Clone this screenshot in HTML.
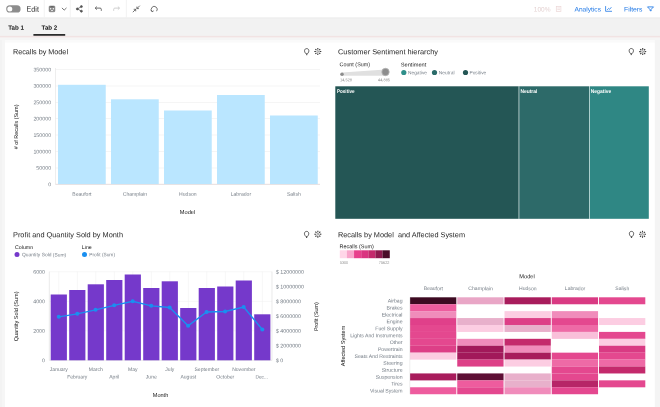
<!DOCTYPE html>
<html><head><meta charset="utf-8"><title>Dashboard</title>
<style>
html,body{margin:0;padding:0;background:#fff;overflow:hidden}
svg{display:block;font-family:"Liberation Sans",sans-serif;will-change:transform;opacity:0.999;filter:blur(0.4px);text-rendering:geometricPrecision}
</style></head>
<body>
<svg width="660" height="407" viewBox="0 0 660 407">
<rect x="0.00" y="0.00" width="660.00" height="407.00" fill="#ffffff"/>
<rect x="0.00" y="0.00" width="660.00" height="17.80" fill="#ffffff"/>
<rect x="0.00" y="17.80" width="660.00" height="18.60" fill="#f2f2f2"/>
<line x1="0" y1="17.8" x2="660" y2="17.8" stroke="#e4e4e4" stroke-width="0.6"/>
<rect x="0.00" y="35.90" width="660.00" height="1.80" fill="#f1e3e3"/>
<rect x="0.00" y="37.70" width="660.00" height="2.30" fill="#f5f5f5"/>
<rect x="0.00" y="40.00" width="660.00" height="2.60" fill="#fafafa"/>
<rect x="0.00" y="40.00" width="5.00" height="367.00" fill="#f6f6f6"/>
<rect x="0.00" y="40.00" width="2.00" height="367.00" fill="#f3f3f3"/>
<rect x="654.80" y="40.00" width="5.20" height="367.00" fill="#f4f4f4"/>
<rect x="6.2" y="5.3" width="14.4" height="7.2" rx="3.6" fill="#8d8d8d"/>
<circle cx="9.8" cy="8.9" r="2.5" fill="#ffffff"/>
<text x="26.6" y="11.64" transform="rotate(0.03 26.6 11.64)" font-size="7.6" fill="#2a2a2a" text-anchor="start" textLength="12.3" lengthAdjust="spacingAndGlyphs">Edit</text>
<line x1="44.3" y1="0" x2="44.3" y2="17.5" stroke="#f0f0f0" stroke-width="0.8"/>
<line x1="70.3" y1="0" x2="70.3" y2="17.5" stroke="#f0f0f0" stroke-width="0.8"/>
<line x1="88.5" y1="0" x2="88.5" y2="17.5" stroke="#f0f0f0" stroke-width="0.8"/>
<line x1="126.4" y1="0" x2="126.4" y2="17.5" stroke="#f0f0f0" stroke-width="0.8"/>
<rect x="49.1" y="6" width="5.8" height="5.8" rx="0.9" fill="#858585" stroke="#6f6f6f" stroke-width="0.5"/><rect x="50.6" y="6.3" width="2.8" height="0.9" fill="#5a5a5a"/><circle cx="50.6" cy="8.7" r="0.75" fill="#f4f4f4"/><circle cx="53.4" cy="8.7" r="0.75" fill="#f4f4f4"/><rect x="51.1" y="10" width="1.8" height="1" fill="#e8e8e8"/>
<path d="M61.9 7.9 L64.2 10.1 L66.5 7.9" fill="none" stroke="#525252" stroke-width="0.8"/>
<g stroke="#525252" stroke-width="0.7" fill="#525252"><line x1="77.4" y1="8.9" x2="81.4" y2="6.6"/><line x1="77.4" y1="8.9" x2="81.4" y2="11.2"/><circle cx="77.3" cy="8.9" r="1"/><circle cx="81.4" cy="6.6" r="1"/><circle cx="81.4" cy="11.2" r="1"/></g>
<path d="M96.8 6.6 L95.2 8.1 L96.8 9.6 M95.3 8.1 H100.1 Q101.3 8.1 101.3 9.3 V10.8" fill="none" stroke="#525252" stroke-width="0.85"/>
<path d="M117.9 6.6 L119.5 8.1 L117.9 9.6 M119.4 8.1 H114.8 Q113.7 8.1 113.7 9.3 V10.8" fill="none" stroke="#c6c6c6" stroke-width="0.85"/>
<path d="M139.8 5.7 L136.9 8.6 M136.9 6.6 V8.6 H138.9 M132.8 12.2 L135.7 9.3 M135.7 11.3 V9.3 H133.7" fill="none" stroke="#525252" stroke-width="0.8"/>
<path d="M152.2 11.6 A3 3 0 1 1 156.6 11.2 M150.9 10.2 L152.1 11.8 L153.7 10.8" fill="none" stroke="#525252" stroke-width="0.8"/>
<text x="533.8" y="11.40" transform="rotate(0.03 533.8 11.40)" font-size="6.4" fill="#e4d2d2" text-anchor="start" textLength="16.7" lengthAdjust="spacingAndGlyphs">100%</text>
<g fill="none" stroke="#ecd6d6" stroke-width="0.7"><rect x="556.3" y="6.4" width="4.6" height="5.2"/><line x1="557.3" y1="8" x2="560" y2="8"/><line x1="557.3" y1="9.6" x2="560" y2="9.6"/></g>
<text x="574.5" y="11.38" transform="rotate(0.03 574.5 11.38)" font-size="6.6" fill="#1f78e6" text-anchor="start" textLength="26.5" lengthAdjust="spacingAndGlyphs">Analytics</text>
<path d="M605.6 6.1 V11.3 H612 M607.1 9.9 L608.6 8.4 L609.6 9.3 L611.4 7.2" fill="none" stroke="#1f78e6" stroke-width="0.8"/>
<text x="624" y="11.38" transform="rotate(0.03 624 11.38)" font-size="6.6" fill="#1f78e6" text-anchor="start" textLength="18.5" lengthAdjust="spacingAndGlyphs">Filters</text>
<path d="M647.5 6.9 H653.5 L651.1 9.4 V11 L649.9 10.4 V9.4 Z" fill="none" stroke="#1f78e6" stroke-width="0.85" stroke-linejoin="round"/>
<text x="8.2" y="29.67" transform="rotate(0.03 8.2 29.67)" font-size="6.3" fill="#161616" text-anchor="start" font-weight="bold" textLength="15.7" lengthAdjust="spacingAndGlyphs">Tab 1</text>
<text x="41.6" y="29.67" transform="rotate(0.03 41.6 29.67)" font-size="6.3" fill="#161616" text-anchor="start" font-weight="bold" textLength="15.7" lengthAdjust="spacingAndGlyphs">Tab 2</text>
<rect x="33.40" y="34.10" width="31.80" height="1.60" fill="#161616"/>
<text x="13" y="54.25" transform="rotate(0.03 13 54.25)" font-size="7.35" fill="#262626" text-anchor="start" textLength="55" lengthAdjust="spacingAndGlyphs">Recalls by Model</text>
<g fill="none" stroke="#393939" stroke-width="0.8" stroke-linejoin="round"><path d="M306.00 53.80 C303.70 51.50 304.30 48.60 306.7 48.60 C309.10 48.60 309.70 51.50 307.40 53.80 Z"/><line x1="306.10" y1="54.70" x2="307.30" y2="54.70" stroke-width="0.9"/></g>
<g fill="none" stroke="#393939" stroke-width="1.1"><circle cx="317.8" cy="51.5" r="0.9" stroke="#6f6f6f" stroke-width="0.7"/><line x1="319.70" y1="51.50" x2="321.30" y2="51.50"/><line x1="319.14" y1="52.84" x2="320.27" y2="53.97"/><line x1="317.80" y1="53.40" x2="317.80" y2="55.00"/><line x1="316.46" y1="52.84" x2="315.33" y2="53.97"/><line x1="315.90" y1="51.50" x2="314.30" y2="51.50"/><line x1="316.46" y1="50.16" x2="315.33" y2="49.03"/><line x1="317.80" y1="49.60" x2="317.80" y2="48.00"/><line x1="319.14" y1="50.16" x2="320.27" y2="49.03"/></g>
<line x1="55.5" y1="184.5" x2="320" y2="184.5" stroke="#eeeeee" stroke-width="0.6"/>
<text x="51.1" y="186.21" transform="rotate(0.03 51.1 186.21)" font-size="5.3" fill="#757d86" text-anchor="end">0</text>
<line x1="55.5" y1="168.0" x2="320" y2="168.0" stroke="#eeeeee" stroke-width="0.6"/>
<text x="51.1" y="169.81" transform="rotate(0.03 51.1 169.81)" font-size="5.3" fill="#757d86" text-anchor="end">50000</text>
<line x1="55.5" y1="151.5" x2="320" y2="151.5" stroke="#eeeeee" stroke-width="0.6"/>
<text x="51.1" y="153.41" transform="rotate(0.03 51.1 153.41)" font-size="5.3" fill="#757d86" text-anchor="end">100000</text>
<line x1="55.5" y1="135.0" x2="320" y2="135.0" stroke="#eeeeee" stroke-width="0.6"/>
<text x="51.1" y="137.01" transform="rotate(0.03 51.1 137.01)" font-size="5.3" fill="#757d86" text-anchor="end">150000</text>
<line x1="55.5" y1="118.5" x2="320" y2="118.5" stroke="#eeeeee" stroke-width="0.6"/>
<text x="51.1" y="120.61" transform="rotate(0.03 51.1 120.61)" font-size="5.3" fill="#757d86" text-anchor="end">200000</text>
<line x1="55.5" y1="102.5" x2="320" y2="102.5" stroke="#eeeeee" stroke-width="0.6"/>
<text x="51.1" y="104.21" transform="rotate(0.03 51.1 104.21)" font-size="5.3" fill="#757d86" text-anchor="end">250000</text>
<line x1="55.5" y1="86.0" x2="320" y2="86.0" stroke="#eeeeee" stroke-width="0.6"/>
<text x="51.1" y="87.81" transform="rotate(0.03 51.1 87.81)" font-size="5.3" fill="#757d86" text-anchor="end">300000</text>
<line x1="55.5" y1="69.5" x2="320" y2="69.5" stroke="#eeeeee" stroke-width="0.6"/>
<text x="51.1" y="71.41" transform="rotate(0.03 51.1 71.41)" font-size="5.3" fill="#757d86" text-anchor="end">350000</text>
<line x1="55.5" y1="68" x2="55.5" y2="184.3" stroke="#e2e2e2" stroke-width="0.6"/>
<line x1="55.5" y1="184.3" x2="320" y2="184.3" stroke="#e2d4d4" stroke-width="0.7"/>
<rect x="58.00" y="84.80" width="47.75" height="99.30" fill="#bae6ff"/>
<text x="81.9" y="195.84" transform="rotate(0.03 81.9 195.84)" font-size="5.1" fill="#757d86" text-anchor="middle">Beaufort</text>
<rect x="111.00" y="99.30" width="47.75" height="84.80" fill="#bae6ff"/>
<text x="134.9" y="195.84" transform="rotate(0.03 134.9 195.84)" font-size="5.1" fill="#757d86" text-anchor="middle">Champlain</text>
<rect x="164.00" y="110.50" width="47.75" height="73.60" fill="#bae6ff"/>
<text x="187.9" y="195.84" transform="rotate(0.03 187.9 195.84)" font-size="5.1" fill="#757d86" text-anchor="middle">Hudson</text>
<rect x="217.00" y="95.00" width="47.75" height="89.10" fill="#bae6ff"/>
<text x="240.9" y="195.84" transform="rotate(0.03 240.9 195.84)" font-size="5.1" fill="#757d86" text-anchor="middle">Labrador</text>
<rect x="270.00" y="115.50" width="47.75" height="68.60" fill="#bae6ff"/>
<text x="293.9" y="195.84" transform="rotate(0.03 293.9 195.84)" font-size="5.1" fill="#757d86" text-anchor="middle">Salish</text>
<text transform="translate(18.36,126.9) rotate(-90)" font-size="5.45" fill="#161616" text-anchor="middle"># of Recalls (Sum)</text>
<text x="187.5" y="214.05" transform="rotate(0.03 187.5 214.05)" font-size="5.7" fill="#161616" text-anchor="middle" textLength="15.5" lengthAdjust="spacingAndGlyphs">Model</text>
<text x="338" y="54.25" transform="rotate(0.03 338 54.25)" font-size="7.35" fill="#262626" text-anchor="start" textLength="100" lengthAdjust="spacingAndGlyphs">Customer Sentiment hierarchy</text>
<g fill="none" stroke="#393939" stroke-width="0.8" stroke-linejoin="round"><path d="M630.60 53.70 C628.30 51.40 628.90 48.50 631.3 48.50 C633.70 48.50 634.30 51.40 632.00 53.70 Z"/><line x1="630.70" y1="54.60" x2="631.90" y2="54.60" stroke-width="0.9"/></g>
<g fill="none" stroke="#393939" stroke-width="1.1"><circle cx="642.7" cy="51.6" r="0.9" stroke="#6f6f6f" stroke-width="0.7"/><line x1="644.60" y1="51.60" x2="646.20" y2="51.60"/><line x1="644.04" y1="52.94" x2="645.17" y2="54.07"/><line x1="642.70" y1="53.50" x2="642.70" y2="55.10"/><line x1="641.36" y1="52.94" x2="640.23" y2="54.07"/><line x1="640.80" y1="51.60" x2="639.20" y2="51.60"/><line x1="641.36" y1="50.26" x2="640.23" y2="49.13"/><line x1="642.70" y1="49.70" x2="642.70" y2="48.10"/><line x1="644.04" y1="50.26" x2="645.17" y2="49.13"/></g>
<text x="339.5" y="66.28" transform="rotate(0.03 339.5 66.28)" font-size="5.5" fill="#262626" text-anchor="start" textLength="30.5" lengthAdjust="spacingAndGlyphs">Count (Sum)</text>
<path d="M342 72.5 L385.5 69.6 L385.5 75.8 L342 75.8 Z" fill="#e0e0e0"/>
<circle cx="342" cy="74.2" r="1.8" fill="#8d8d8d"/>
<circle cx="385.5" cy="72" r="3.7" fill="#8d8d8d" stroke="#b5b5b5" stroke-width="0.8"/>
<text x="340" y="81.34" transform="rotate(0.03 340 81.34)" font-size="4.0" fill="#8d8d8d" text-anchor="start" textLength="12" lengthAdjust="spacingAndGlyphs">14,528</text>
<text x="378" y="81.34" transform="rotate(0.03 378 81.34)" font-size="4.0" fill="#8d8d8d" text-anchor="start" textLength="12" lengthAdjust="spacingAndGlyphs">44,885</text>
<text x="400.8" y="66.48" transform="rotate(0.03 400.8 66.48)" font-size="5.5" fill="#262626" text-anchor="start" textLength="25.5" lengthAdjust="spacingAndGlyphs">Sentiment</text>
<circle cx="403.8" cy="72.5" r="2.6" fill="#2f8f8a"/>
<text x="408" y="74.25" transform="rotate(0.03 408 74.25)" font-size="4.85" fill="#757d86" text-anchor="start" textLength="19" lengthAdjust="spacingAndGlyphs">Negative</text>
<circle cx="434.5" cy="72.5" r="2.6" fill="#2a6b69"/>
<text x="438.8" y="74.25" transform="rotate(0.03 438.8 74.25)" font-size="4.85" fill="#757d86" text-anchor="start" textLength="15.7" lengthAdjust="spacingAndGlyphs">Neutral</text>
<circle cx="465.5" cy="72.5" r="2.6" fill="#245655"/>
<text x="469.5" y="74.25" transform="rotate(0.03 469.5 74.25)" font-size="4.85" fill="#757d86" text-anchor="start" textLength="16.8" lengthAdjust="spacingAndGlyphs">Positive</text>
<rect x="335.30" y="86.30" width="183.40" height="132.50" fill="#245655"/>
<rect x="519.20" y="86.30" width="70.00" height="132.50" fill="#2d6a69"/>
<rect x="589.80" y="86.30" width="59.00" height="132.50" fill="#2f8784"/>
<line x1="518.9" y1="86.5" x2="518.9" y2="218.8" stroke="#8fb0af" stroke-width="0.6"/>
<line x1="589.5" y1="86.8" x2="589.5" y2="218.8" stroke="#a9cfcd" stroke-width="0.6"/>
<text x="337" y="93.21" transform="rotate(0.03 337 93.21)" font-size="5.3" fill="#ffffff" text-anchor="start" font-weight="bold" textLength="17.5" lengthAdjust="spacingAndGlyphs">Positive</text>
<text x="520.4" y="93.21" transform="rotate(0.03 520.4 93.21)" font-size="5.3" fill="#ffffff" text-anchor="start" font-weight="bold" textLength="17" lengthAdjust="spacingAndGlyphs">Neutral</text>
<text x="590.8" y="93.21" transform="rotate(0.03 590.8 93.21)" font-size="5.3" fill="#ffffff" text-anchor="start" font-weight="bold" textLength="20.4" lengthAdjust="spacingAndGlyphs">Negative</text>
<text x="13" y="237.15" transform="rotate(0.03 13 237.15)" font-size="7.35" fill="#262626" text-anchor="start" textLength="110" lengthAdjust="spacingAndGlyphs">Profit and Quantity Sold by Month</text>
<g fill="none" stroke="#393939" stroke-width="0.8" stroke-linejoin="round"><path d="M305.90 236.60 C303.60 234.30 304.20 231.40 306.6 231.40 C309.00 231.40 309.60 234.30 307.30 236.60 Z"/><line x1="306.00" y1="237.50" x2="307.20" y2="237.50" stroke-width="0.9"/></g>
<g fill="none" stroke="#393939" stroke-width="1.1"><circle cx="317.85" cy="234.2" r="0.9" stroke="#6f6f6f" stroke-width="0.7"/><line x1="319.75" y1="234.20" x2="321.35" y2="234.20"/><line x1="319.19" y1="235.54" x2="320.32" y2="236.67"/><line x1="317.85" y1="236.10" x2="317.85" y2="237.70"/><line x1="316.51" y1="235.54" x2="315.38" y2="236.67"/><line x1="315.95" y1="234.20" x2="314.35" y2="234.20"/><line x1="316.51" y1="232.86" x2="315.38" y2="231.73"/><line x1="317.85" y1="232.30" x2="317.85" y2="230.70"/><line x1="319.19" y1="232.86" x2="320.32" y2="231.73"/></g>
<text x="15" y="248.91" transform="rotate(0.03 15 248.91)" font-size="5.3" fill="#161616" text-anchor="start" textLength="18.2" lengthAdjust="spacingAndGlyphs">Column</text>
<circle cx="17" cy="254.6" r="2.5" fill="#7539cb"/>
<text x="22" y="256.36" transform="rotate(0.03 22 256.36)" font-size="4.9" fill="#757d86" text-anchor="start" textLength="44.2" lengthAdjust="spacingAndGlyphs">Quantity Sold (Sum)</text>
<text x="81.8" y="248.91" transform="rotate(0.03 81.8 248.91)" font-size="5.3" fill="#161616" text-anchor="start" textLength="10" lengthAdjust="spacingAndGlyphs">Line</text>
<circle cx="84.5" cy="254.6" r="2.5" fill="#1a8ff0"/>
<text x="89.3" y="256.36" transform="rotate(0.03 89.3 256.36)" font-size="4.9" fill="#757d86" text-anchor="start" textLength="25.7" lengthAdjust="spacingAndGlyphs">Profit (Sum)</text>
<line x1="49.3" y1="330.8" x2="272" y2="330.8" stroke="#f0f0f0" stroke-width="0.6"/>
<line x1="49.3" y1="301.3" x2="272" y2="301.3" stroke="#f0f0f0" stroke-width="0.6"/>
<line x1="49.3" y1="271.8" x2="272" y2="271.8" stroke="#f0f0f0" stroke-width="0.6"/>
<text x="45" y="362.21" transform="rotate(0.03 45 362.21)" font-size="5.3" fill="#757d86" text-anchor="end">0</text>
<text x="45" y="332.71" transform="rotate(0.03 45 332.71)" font-size="5.3" fill="#757d86" text-anchor="end">2000</text>
<text x="45" y="303.21" transform="rotate(0.03 45 303.21)" font-size="5.3" fill="#757d86" text-anchor="end">4000</text>
<text x="45" y="273.71" transform="rotate(0.03 45 273.71)" font-size="5.3" fill="#757d86" text-anchor="end">6000</text>
<text x="275.8" y="362.23" transform="rotate(0.03 275.8 362.23)" font-size="5.35" fill="#757d86" text-anchor="start">$ 0</text>
<text x="275.8" y="347.48" transform="rotate(0.03 275.8 347.48)" font-size="5.35" fill="#757d86" text-anchor="start">$ 2000000</text>
<text x="275.8" y="332.73" transform="rotate(0.03 275.8 332.73)" font-size="5.35" fill="#757d86" text-anchor="start">$ 4000000</text>
<text x="275.8" y="317.98" transform="rotate(0.03 275.8 317.98)" font-size="5.35" fill="#757d86" text-anchor="start">$ 6000000</text>
<text x="275.8" y="303.23" transform="rotate(0.03 275.8 303.23)" font-size="5.35" fill="#757d86" text-anchor="start">$ 8000000</text>
<text x="275.8" y="288.48" transform="rotate(0.03 275.8 288.48)" font-size="5.35" fill="#757d86" text-anchor="start">$ 10000000</text>
<text x="275.8" y="273.73" transform="rotate(0.03 275.8 273.73)" font-size="5.35" fill="#757d86" text-anchor="start">$ 12000000</text>
<line x1="58.8" y1="271.7" x2="58.8" y2="360.3" stroke="#f0f0f0" stroke-width="0.6"/>
<line x1="77.3" y1="271.7" x2="77.3" y2="360.3" stroke="#f0f0f0" stroke-width="0.6"/>
<line x1="95.8" y1="271.7" x2="95.8" y2="360.3" stroke="#f0f0f0" stroke-width="0.6"/>
<line x1="114.3" y1="271.7" x2="114.3" y2="360.3" stroke="#f0f0f0" stroke-width="0.6"/>
<line x1="132.8" y1="271.7" x2="132.8" y2="360.3" stroke="#f0f0f0" stroke-width="0.6"/>
<line x1="151.3" y1="271.7" x2="151.3" y2="360.3" stroke="#f0f0f0" stroke-width="0.6"/>
<line x1="169.8" y1="271.7" x2="169.8" y2="360.3" stroke="#f0f0f0" stroke-width="0.6"/>
<line x1="188.3" y1="271.7" x2="188.3" y2="360.3" stroke="#f0f0f0" stroke-width="0.6"/>
<line x1="206.8" y1="271.7" x2="206.8" y2="360.3" stroke="#f0f0f0" stroke-width="0.6"/>
<line x1="225.3" y1="271.7" x2="225.3" y2="360.3" stroke="#f0f0f0" stroke-width="0.6"/>
<line x1="243.8" y1="271.7" x2="243.8" y2="360.3" stroke="#f0f0f0" stroke-width="0.6"/>
<line x1="262.3" y1="271.7" x2="262.3" y2="360.3" stroke="#f0f0f0" stroke-width="0.6"/>
<line x1="49.3" y1="271.7" x2="49.3" y2="360.3" stroke="#dcdcdc" stroke-width="0.6"/>
<line x1="272" y1="271.7" x2="272" y2="360.3" stroke="#dcdcdc" stroke-width="0.6"/>
<line x1="49.3" y1="360.3" x2="272" y2="360.3" stroke="#dcdcdc" stroke-width="0.6"/>
<rect x="50.70" y="294.50" width="16.20" height="65.80" fill="#7539cb"/>
<rect x="69.20" y="290.00" width="16.20" height="70.30" fill="#7539cb"/>
<rect x="87.70" y="284.30" width="16.20" height="76.00" fill="#7539cb"/>
<rect x="106.20" y="280.00" width="16.20" height="80.30" fill="#7539cb"/>
<rect x="124.70" y="274.50" width="16.20" height="85.80" fill="#7539cb"/>
<rect x="143.20" y="288.00" width="16.20" height="72.30" fill="#7539cb"/>
<rect x="161.70" y="281.30" width="16.20" height="79.00" fill="#7539cb"/>
<rect x="180.20" y="308.00" width="16.20" height="52.30" fill="#7539cb"/>
<rect x="198.70" y="288.00" width="16.20" height="72.30" fill="#7539cb"/>
<rect x="217.20" y="286.50" width="16.20" height="73.80" fill="#7539cb"/>
<rect x="235.70" y="280.50" width="16.20" height="79.80" fill="#7539cb"/>
<rect x="254.20" y="314.30" width="16.20" height="46.00" fill="#7539cb"/>
<polyline fill="none" stroke="#1a8ff0" stroke-width="1.35" points="58.8,316.8 77.3,313.8 95.6,309.8 114.2,305.3 132.7,301.3 151.2,305.8 169.6,307.5 188.1,325.8 206.6,312 225.1,311.5 243.7,307 262.3,329.5"/>
<circle cx="58.8" cy="316.8" r="2.05" fill="#1a8ff0"/>
<circle cx="77.3" cy="313.8" r="2.05" fill="#1a8ff0"/>
<circle cx="95.6" cy="309.8" r="2.05" fill="#1a8ff0"/>
<circle cx="114.2" cy="305.3" r="2.05" fill="#1a8ff0"/>
<circle cx="132.7" cy="301.3" r="2.05" fill="#1a8ff0"/>
<circle cx="151.2" cy="305.8" r="2.05" fill="#1a8ff0"/>
<circle cx="169.6" cy="307.5" r="2.05" fill="#1a8ff0"/>
<circle cx="188.1" cy="325.8" r="2.05" fill="#1a8ff0"/>
<circle cx="206.6" cy="312" r="2.05" fill="#1a8ff0"/>
<circle cx="225.1" cy="311.5" r="2.05" fill="#1a8ff0"/>
<circle cx="243.7" cy="307" r="2.05" fill="#1a8ff0"/>
<circle cx="262.3" cy="329.5" r="2.05" fill="#1a8ff0"/>
<text x="58.8" y="371.02" transform="rotate(0.03 58.8 371.02)" font-size="5.05" fill="#757d86" text-anchor="middle">January</text>
<text x="77.3" y="378.52" transform="rotate(0.03 77.3 378.52)" font-size="5.05" fill="#757d86" text-anchor="middle">February</text>
<text x="95.8" y="371.02" transform="rotate(0.03 95.8 371.02)" font-size="5.05" fill="#757d86" text-anchor="middle">March</text>
<text x="114.3" y="378.52" transform="rotate(0.03 114.3 378.52)" font-size="5.05" fill="#757d86" text-anchor="middle">April</text>
<text x="132.8" y="371.02" transform="rotate(0.03 132.8 371.02)" font-size="5.05" fill="#757d86" text-anchor="middle">May</text>
<text x="151.3" y="378.52" transform="rotate(0.03 151.3 378.52)" font-size="5.05" fill="#757d86" text-anchor="middle">June</text>
<text x="169.8" y="371.02" transform="rotate(0.03 169.8 371.02)" font-size="5.05" fill="#757d86" text-anchor="middle">July</text>
<text x="188.3" y="378.52" transform="rotate(0.03 188.3 378.52)" font-size="5.05" fill="#757d86" text-anchor="middle">August</text>
<text x="206.8" y="371.02" transform="rotate(0.03 206.8 371.02)" font-size="5.05" fill="#757d86" text-anchor="middle">September</text>
<text x="225.3" y="378.52" transform="rotate(0.03 225.3 378.52)" font-size="5.05" fill="#757d86" text-anchor="middle">October</text>
<text x="243.8" y="371.02" transform="rotate(0.03 243.8 371.02)" font-size="5.05" fill="#757d86" text-anchor="middle">November</text>
<text x="255.5" y="378.46" transform="rotate(0.03 255.5 378.46)" font-size="4.9" fill="#757d86" text-anchor="start" textLength="12.5" lengthAdjust="spacingAndGlyphs">Dec...</text>
<text transform="translate(18.30,316.4) rotate(-90)" font-size="5.55" fill="#161616" text-anchor="middle">Quantity Sold (Sum)</text>
<text transform="translate(318.36,316.6) rotate(-90)" font-size="5.45" fill="#161616" text-anchor="middle">Profit (Sum)</text>
<text x="160.5" y="397.05" transform="rotate(0.03 160.5 397.05)" font-size="5.7" fill="#161616" text-anchor="middle" textLength="15.5" lengthAdjust="spacingAndGlyphs">Month</text>
<text x="338" y="237.15" transform="rotate(0.03 338 237.15)" font-size="7.35" fill="#262626" text-anchor="start" textLength="127" lengthAdjust="spacingAndGlyphs" style="white-space:pre">Recalls by Model  and Affected System</text>
<g fill="none" stroke="#393939" stroke-width="0.8" stroke-linejoin="round"><path d="M630.80 236.60 C628.50 234.30 629.10 231.40 631.5 231.40 C633.90 231.40 634.50 234.30 632.20 236.60 Z"/><line x1="630.90" y1="237.50" x2="632.10" y2="237.50" stroke-width="0.9"/></g>
<g fill="none" stroke="#393939" stroke-width="1.1"><circle cx="642.5" cy="234.3" r="0.9" stroke="#6f6f6f" stroke-width="0.7"/><line x1="644.40" y1="234.30" x2="646.00" y2="234.30"/><line x1="643.84" y1="235.64" x2="644.97" y2="236.77"/><line x1="642.50" y1="236.20" x2="642.50" y2="237.80"/><line x1="641.16" y1="235.64" x2="640.03" y2="236.77"/><line x1="640.60" y1="234.30" x2="639.00" y2="234.30"/><line x1="641.16" y1="232.96" x2="640.03" y2="231.83"/><line x1="642.50" y1="232.40" x2="642.50" y2="230.80"/><line x1="643.84" y1="232.96" x2="644.97" y2="231.83"/></g>
<text x="339.5" y="248.26" transform="rotate(0.03 339.5 248.26)" font-size="5.45" fill="#161616" text-anchor="start" textLength="34.3" lengthAdjust="spacingAndGlyphs">Recalls (Sum)</text>
<rect x="339.80" y="250.30" width="7.20" height="7.90" fill="#ffd6e8"/>
<rect x="346.93" y="250.30" width="7.20" height="7.90" fill="#f8a5cb"/>
<rect x="354.06" y="250.30" width="7.20" height="7.90" fill="#e8408c"/>
<rect x="361.19" y="250.30" width="7.20" height="7.90" fill="#da3580"/>
<rect x="368.32" y="250.30" width="7.20" height="7.90" fill="#c42a6c"/>
<rect x="375.45" y="250.30" width="7.20" height="7.90" fill="#8e1a4e"/>
<rect x="382.58" y="250.30" width="7.20" height="7.90" fill="#4a0d28"/>
<text x="340" y="263.94" transform="rotate(0.03 340 263.94)" font-size="4.0" fill="#8d8d8d" text-anchor="start" textLength="8" lengthAdjust="spacingAndGlyphs">5300</text>
<text x="378.8" y="263.94" transform="rotate(0.03 378.8 263.94)" font-size="4.0" fill="#8d8d8d" text-anchor="start" textLength="10.7" lengthAdjust="spacingAndGlyphs">75622</text>
<text x="527" y="278.35" transform="rotate(0.03 527 278.35)" font-size="5.7" fill="#161616" text-anchor="middle" textLength="15.5" lengthAdjust="spacingAndGlyphs">Model</text>
<text x="433.3" y="290.14" transform="rotate(0.03 433.3 290.14)" font-size="5.1" fill="#757d86" text-anchor="middle">Beaufort</text>
<rect x="410.00" y="297.30" width="46.30" height="6.97" fill="#3d0a22"/>
<rect x="410.00" y="304.22" width="46.30" height="6.97" fill="#ee5c9e"/>
<rect x="410.00" y="311.14" width="46.30" height="6.97" fill="#f08cbb"/>
<rect x="410.00" y="318.06" width="46.30" height="6.97" fill="#e0408a"/>
<rect x="410.00" y="324.98" width="46.30" height="6.97" fill="#e4488f"/>
<rect x="410.00" y="331.90" width="46.30" height="6.97" fill="#e4488f"/>
<rect x="410.00" y="338.82" width="46.30" height="6.97" fill="#e4488f"/>
<rect x="410.00" y="345.74" width="46.30" height="6.97" fill="#dd3f87"/>
<rect x="410.00" y="352.66" width="46.30" height="6.97" fill="#fccde2"/>
<rect x="410.00" y="373.42" width="46.30" height="6.97" fill="#a81c5c"/>
<rect x="410.00" y="387.26" width="46.30" height="6.97" fill="#ee5c9e"/>
<text x="480.55" y="290.14" transform="rotate(0.03 480.55 290.14)" font-size="5.1" fill="#757d86" text-anchor="middle">Champlain</text>
<rect x="457.25" y="297.30" width="46.30" height="6.97" fill="#e9a6c6"/>
<rect x="457.25" y="318.06" width="46.30" height="6.97" fill="#e8b0cb"/>
<rect x="457.25" y="324.98" width="46.30" height="6.97" fill="#fccde2"/>
<rect x="457.25" y="338.82" width="46.30" height="6.97" fill="#f08cbb"/>
<rect x="457.25" y="345.74" width="46.30" height="6.97" fill="#a2195a"/>
<rect x="457.25" y="352.66" width="46.30" height="6.97" fill="#a2195a"/>
<rect x="457.25" y="359.58" width="46.30" height="6.97" fill="#dd3f87"/>
<rect x="457.25" y="373.42" width="46.30" height="6.97" fill="#5e0f35"/>
<rect x="457.25" y="380.34" width="46.30" height="6.97" fill="#ee5c9e"/>
<rect x="457.25" y="387.26" width="46.30" height="6.97" fill="#e4488f"/>
<text x="527.8" y="290.14" transform="rotate(0.03 527.8 290.14)" font-size="5.1" fill="#757d86" text-anchor="middle">Hudson</text>
<rect x="504.50" y="297.30" width="46.30" height="6.97" fill="#a81c5c"/>
<rect x="504.50" y="311.14" width="46.30" height="6.97" fill="#fccde2"/>
<rect x="504.50" y="318.06" width="46.30" height="6.97" fill="#dd3f87"/>
<rect x="504.50" y="324.98" width="46.30" height="6.97" fill="#e8b0cb"/>
<rect x="504.50" y="338.82" width="46.30" height="6.97" fill="#c42a6c"/>
<rect x="504.50" y="345.74" width="46.30" height="6.97" fill="#f08cbb"/>
<rect x="504.50" y="352.66" width="46.30" height="6.97" fill="#a81c5c"/>
<rect x="504.50" y="359.58" width="46.30" height="6.97" fill="#fccde2"/>
<rect x="504.50" y="373.42" width="46.30" height="6.97" fill="#e8b0cb"/>
<rect x="504.50" y="380.34" width="46.30" height="6.97" fill="#e8b0cb"/>
<rect x="504.50" y="387.26" width="46.30" height="6.97" fill="#f08cbb"/>
<text x="575.05" y="290.14" transform="rotate(0.03 575.05 290.14)" font-size="5.1" fill="#757d86" text-anchor="middle">Labrador</text>
<rect x="551.75" y="297.30" width="46.30" height="6.97" fill="#d93a83"/>
<rect x="551.75" y="311.14" width="46.30" height="6.97" fill="#f08cbb"/>
<rect x="551.75" y="318.06" width="46.30" height="6.97" fill="#e4488f"/>
<rect x="551.75" y="324.98" width="46.30" height="6.97" fill="#ee6aa6"/>
<rect x="551.75" y="331.90" width="46.30" height="6.97" fill="#f9bfd9"/>
<rect x="551.75" y="352.66" width="46.30" height="6.97" fill="#e4488f"/>
<rect x="551.75" y="359.58" width="46.30" height="6.97" fill="#ee6aa6"/>
<rect x="551.75" y="366.50" width="46.30" height="6.97" fill="#e4488f"/>
<rect x="551.75" y="373.42" width="46.30" height="6.97" fill="#e4488f"/>
<rect x="551.75" y="380.34" width="46.30" height="6.97" fill="#b72667"/>
<rect x="551.75" y="387.26" width="46.30" height="6.97" fill="#e4488f"/>
<text x="622.3" y="290.14" transform="rotate(0.03 622.3 290.14)" font-size="5.1" fill="#757d86" text-anchor="middle">Salish</text>
<rect x="599.00" y="297.30" width="46.30" height="6.97" fill="#e4488f"/>
<rect x="599.00" y="318.06" width="46.30" height="6.97" fill="#fccde2"/>
<rect x="599.00" y="331.90" width="46.30" height="6.97" fill="#e4488f"/>
<rect x="599.00" y="338.82" width="46.30" height="6.97" fill="#fccde2"/>
<rect x="599.00" y="345.74" width="46.30" height="6.97" fill="#d93a83"/>
<rect x="599.00" y="352.66" width="46.30" height="6.97" fill="#e4488f"/>
<rect x="599.00" y="359.58" width="46.30" height="6.97" fill="#ee6aa6"/>
<rect x="599.00" y="366.50" width="46.30" height="6.97" fill="#c42a6c"/>
<rect x="599.00" y="380.34" width="46.30" height="6.97" fill="#e4488f"/>
<text x="402.5" y="302.56" transform="rotate(0.03 402.5 302.56)" font-size="5.15" fill="#757d86" text-anchor="end">Airbag</text>
<text x="402.5" y="309.48" transform="rotate(0.03 402.5 309.48)" font-size="5.15" fill="#757d86" text-anchor="end">Brakes</text>
<text x="402.5" y="316.40" transform="rotate(0.03 402.5 316.40)" font-size="5.15" fill="#757d86" text-anchor="end">Electrical</text>
<text x="402.5" y="323.32" transform="rotate(0.03 402.5 323.32)" font-size="5.15" fill="#757d86" text-anchor="end">Engine</text>
<text x="402.5" y="330.24" transform="rotate(0.03 402.5 330.24)" font-size="5.15" fill="#757d86" text-anchor="end">Fuel Supply</text>
<text x="402.5" y="337.16" transform="rotate(0.03 402.5 337.16)" font-size="5.15" fill="#757d86" text-anchor="end">Lights And Instruments</text>
<text x="402.5" y="344.08" transform="rotate(0.03 402.5 344.08)" font-size="5.15" fill="#757d86" text-anchor="end">Other</text>
<text x="402.5" y="351.00" transform="rotate(0.03 402.5 351.00)" font-size="5.15" fill="#757d86" text-anchor="end">Powertrain</text>
<text x="402.5" y="357.92" transform="rotate(0.03 402.5 357.92)" font-size="5.15" fill="#757d86" text-anchor="end">Seats And Restraints</text>
<text x="402.5" y="364.84" transform="rotate(0.03 402.5 364.84)" font-size="5.15" fill="#757d86" text-anchor="end">Steering</text>
<text x="402.5" y="371.76" transform="rotate(0.03 402.5 371.76)" font-size="5.15" fill="#757d86" text-anchor="end">Structure</text>
<text x="402.5" y="378.68" transform="rotate(0.03 402.5 378.68)" font-size="5.15" fill="#757d86" text-anchor="end">Suspension</text>
<text x="402.5" y="385.60" transform="rotate(0.03 402.5 385.60)" font-size="5.15" fill="#757d86" text-anchor="end">Tires</text>
<text x="402.5" y="392.52" transform="rotate(0.03 402.5 392.52)" font-size="5.15" fill="#757d86" text-anchor="end">Visual System</text>
<line x1="409.8" y1="297.3" x2="409.8" y2="394.18" stroke="#dcdcdc" stroke-width="0.5"/>
<text transform="translate(345.02,346) rotate(-90)" font-size="5.6" fill="#161616" text-anchor="middle">Affected System</text>
</svg>
</body></html>
